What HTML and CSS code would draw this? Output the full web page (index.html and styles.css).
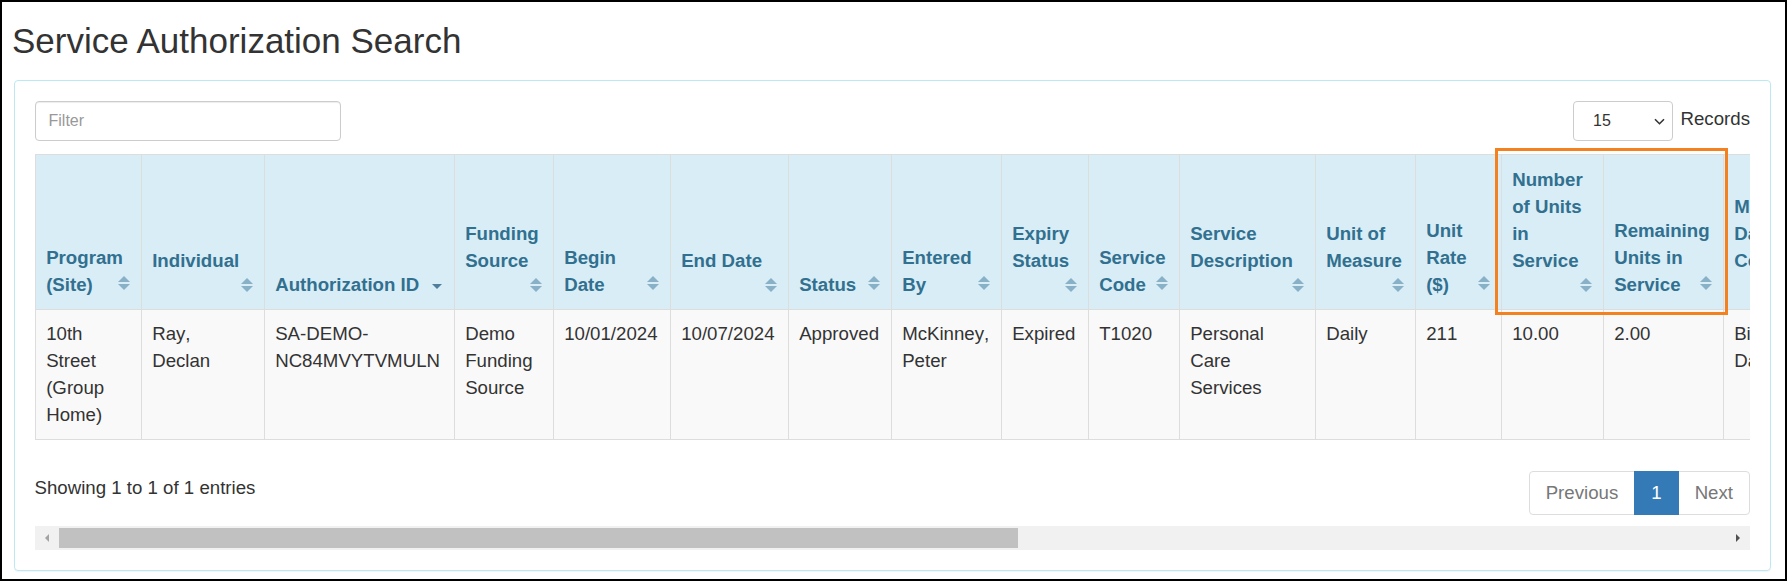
FILE: index.html
```html
<!DOCTYPE html>
<html lang="en">
<head>
    <meta charset="UTF-8">
    <meta name="viewport" content="width=device-width, initial-scale=1.0">
    <title>Service Authorization Search</title>
    <link rel="stylesheet" href="styles.css">
</head>
<body>
    <div class="frame">
        <h1 class="page-title">Service Authorization Search</h1>

        <div class="panel">
            <div class="toolbar">
                <input class="filter" type="text" placeholder="Filter">
                <div class="length">
                    <div class="select-box">
                        <span>15</span>
                        <svg width="11" height="7" viewBox="0 0 11 7"><path d="M1 1.2l4.5 4.5 4.5-4.5" fill="none" stroke="#333" stroke-width="1.6"/></svg>
                    </div>
                    <span class="length-label">Records</span>
                </div>
            </div>

            <div class="table-scroll">
                <table class="grid">
                    <colgroup>
                        <col style="width:106px">
                        <col style="width:123px">
                        <col style="width:190px">
                        <col style="width:99px">
                        <col style="width:117px">
                        <col style="width:118px">
                        <col style="width:103px">
                        <col style="width:110px">
                        <col style="width:87px">
                        <col style="width:91px">
                        <col style="width:136px">
                        <col style="width:100px">
                        <col style="width:86px">
                        <col style="width:102px">
                        <col style="width:120px">
                        <col style="width:125px">
                    </colgroup>
                    <thead>
                        <tr>
                            <th>Program (Site)<span class="sort"></span></th>
                            <th>Individual<span class="sort"></span></th>
                            <th>Authorization ID<span class="sort desc"></span></th>
                            <th>Funding Source<span class="sort"></span></th>
                            <th>Begin Date<span class="sort"></span></th>
                            <th>End Date<span class="sort"></span></th>
                            <th>Status<span class="sort"></span></th>
                            <th>Entered By<span class="sort"></span></th>
                            <th>Expiry Status<span class="sort"></span></th>
                            <th>Service Code<span class="sort"></span></th>
                            <th>Service Description<span class="sort"></span></th>
                            <th>Unit of Measure<span class="sort"></span></th>
                            <th>Unit Rate ($)<span class="sort"></span></th>
                            <th>Number of Units in Service<span class="sort"></span></th>
                            <th>Remaining Units in Service<span class="sort"></span></th>
                            <th>Method of Data Collection<span class="sort"></span></th>
                        </tr>
                    </thead>
                    <tbody>
                        <tr>
                            <td>10th Street (Group Home)</td>
                            <td>Ray, Declan</td>
                            <td>SA-DEMO-NC84MVYTVMULN</td>
                            <td>Demo Funding Source</td>
                            <td>10/01/2024</td>
                            <td>10/07/2024</td>
                            <td>Approved</td>
                            <td>McKinney, Peter</td>
                            <td>Expired</td>
                            <td>T1020</td>
                            <td>Personal Care Services</td>
                            <td>Daily</td>
                            <td>211</td>
                            <td>10.00</td>
                            <td>2.00</td>
                            <td>Billable Days</td>
                        </tr>
                    </tbody>
                </table>
            </div>

            <div class="table-footer">
                <div class="info">Showing 1 to 1 of 1 entries</div>
                <div class="pager">
                    <span class="page disabled">Previous</span>
                    <span class="page active">1</span>
                    <span class="page disabled">Next</span>
                </div>
            </div>

            <!-- fake horizontal scrollbar under the pager -->
            <div class="hscroll">
                <div class="sb-btn"><i class="arrow-left"></i></div>
                <div class="sb-thumb"></div>
                <div class="sb-rest"></div>
                <div class="sb-btn"><i class="arrow-right"></i></div>
            </div>

            <div class="highlight"></div>
        </div>
    </div>
</body>
</html>
```

FILE: styles.css
```css
* {
    padding: 0;
    margin: 0;
}
body {
    font-family: "Liberation Sans", Arial, sans-serif;
    color: #333;
    background: #fff;
}
.frame {
    width: 1787px;
    height: 581px;
    box-sizing: border-box;
    border: 2px solid #000;
    padding: 0 14px 0 11.5px;
}
.page-title {
    font-size: 35px;
    line-height: 38.5px;
    font-weight: normal;
    color: #333;
    margin: 19.5px 0 20px -1.5px;
}

/* panel */
.panel {
    position: relative;
    border: 1px solid #bce8f1;
    border-radius: 4px;
    padding: 20px;
    box-shadow: 0 1px 1px rgba(0, 0, 0, 0.05);
}
.toolbar {
    display: flex;
    justify-content: space-between;
    align-items: center;
    height: 40px;
}
.filter {
    width: 306px;
    height: 40px;
    box-sizing: border-box;
    border: 1px solid #ccc;
    border-radius: 4px;
    padding: 0 13px;
    font-family: "Liberation Sans", Arial, sans-serif;
    font-size: 16px;
    color: #555;
    box-shadow: inset 0 1px 1px rgba(0, 0, 0, 0.075);
}
.filter::placeholder {
    color: #999;
}
.length {
    display: flex;
    align-items: center;
}
.select-box {
    width: 100px;
    height: 40px;
    box-sizing: border-box;
    border: 1px solid #ccc;
    border-radius: 4px;
    display: flex;
    align-items: center;
    justify-content: space-between;
    padding: 0 7px 0 19px;
    font-size: 16px;
    color: #333;
}
.select-box svg {
    display: block;
}
.length-label {
    margin-left: 7.5px;
    font-size: 18.667px;
    line-height: 26.667px;
    margin-top: -3px;
}

/* table */
.table-scroll {
    margin-top: 13px;
    overflow: hidden;
}
.grid {
    width: 1813px;
    table-layout: fixed;
    border-collapse: collapse;
    font-size: 18.667px;
    line-height: 27px;
    font-kerning: none;
}
.grid th,
.grid td {
    border: 1px solid #ddd;
    padding: 10.667px;
    text-align: left;
}
.grid th {
    background-color: #d9edf7;
    color: #31708f;
    font-weight: bold;
    vertical-align: bottom;
}
.grid td {
    background-color: #f9f9f9;
    color: #333;
    vertical-align: top;
}
.sort {
    float: right;
    position: relative;
    width: 12px;
    height: 24.5px;
    margin-left: 5px;
}
.sort::before,
.sort::after {
    content: "";
    position: absolute;
    left: 0;
    border-left: 6px solid transparent;
    border-right: 6px solid transparent;
}
.sort::before {
    top: 4.5px;
    border-bottom: 6px solid #88b0c6;
}
.sort::after {
    top: 12.5px;
    border-top: 6px solid #88b0c6;
}
.sort.desc::before {
    display: none;
}
.sort.desc::after {
    left: 1px;
    top: 13px;
    border-left-width: 5px;
    border-right-width: 5px;
    border-top: 5px solid #4f7f9c;
}

/* footer */
.table-footer {
    display: flex;
    justify-content: space-between;
    align-items: flex-start;
    margin-top: 30.5px;
    font-size: 18.667px;
    line-height: 26.667px;
}
.info {
    padding-top: 4.5px;
}
.pager {
    display: flex;
}
.page {
    border: 1px solid #ddd;
    padding: 8px 16px;
    margin-left: -1px;
    background: #fff;
    color: #777;
}
.page:first-child {
    margin-left: 0;
    border-radius: 4px 0 0 4px;
}
.page:last-child {
    border-radius: 0 4px 4px 0;
}
.page.active {
    background: #337ab7;
    border-color: #337ab7;
    color: #fff;
    position: relative;
}

.hscroll {
    display: flex;
    height: 24px;
    margin-top: 11px;
    background: #f1f1f1;
}
.sb-btn {
    width: 24px;
    flex: none;
    display: flex;
    align-items: center;
    justify-content: center;
}
.sb-thumb {
    width: 959px;
    margin: 2px 0;
    background: #c1c1c1;
}
.sb-rest {
    flex: 1;
}
.arrow-left {
    border-top: 4px solid transparent;
    border-bottom: 4px solid transparent;
    border-right: 4px solid #a3a3a3;
}
.arrow-right {
    border-top: 4px solid transparent;
    border-bottom: 4px solid transparent;
    border-left: 4px solid #505050;
}

/* orange annotation box */
.highlight {
    position: absolute;
    left: 1480.5px;
    top: 66.7px;
    width: 233.3px;
    height: 167.6px;
    box-sizing: border-box;
    border: 3px solid #f4811f;
}
```
